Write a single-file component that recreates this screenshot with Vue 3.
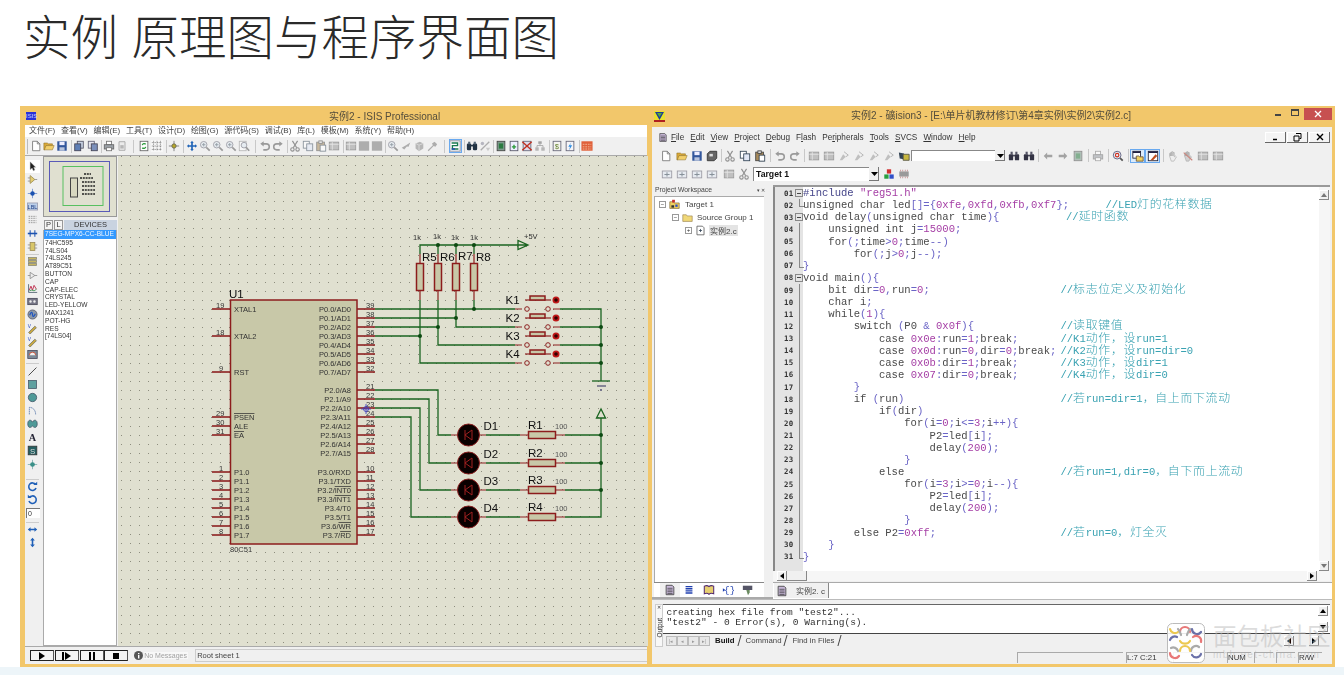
<script setup>
// toolbar tokens: name = icon, name~ = greyed out, name! = pressed, number = spacer width
function parseBar(list) {
  return list.map((t) => {
    if (typeof t === 'number') return { gap: t };
    if (typeof t === 'object') return t;
    const last = t[t.length - 1];
    if (last === '~') return { icon: t.slice(0, -1), dim: true };
    if (last === '!') return { icon: t.slice(0, -1), on: true };
    return { icon: t };
  });
}

const isisBar = parseBar([
  'new', 'open', 'save', 4, 'stack', 1, 'stack2', 3, 'print', 'area~', 9, 'refresh', 'grid', 4, 'origin', 5,
  'cross', 'zin~', 'zin~', 'zin~', 'zarea~', 8, 'undo~', 'redo~', 4, 'cut~', 'copy~', 'paste~', 'block~', 4,
  'block~', 'fill~', 'fill~', 3, 'zin~', 'pick~', 'pkg~', 'tool~', 10, 'wire!', 4, 'find', 'tag~', 3,
  'sheet', 'sheetadd', 'sheetx', 'tree~', 4, 'bom', 'check', 4, 'red'
]);

const isisSide = [
  'arrow', 'comp', 'junction', 'lbl', 'script', 'bus', 'subc', 2, 'term', 'port', 'graph', 'tape', 'gen', 'probe',
  'probe', 'instr', 3, 'line', 'rect', 'circ', 'arc', 'blob', 'letter', 'sym', 'marker', 9, 'cw', 'ccw', 'input',
  3, 'fliph', 'flipv'
];

const uvRow1 = parseBar([
  'new', 1, 'open', 'save', 'saveall', 3, 'cut~', 'copy', 'paste', 5, 'undo~', 'redo~', 4, 'block~', 'block~',
  'flag~', 'flag~', 'flag~', 'flag~', 'findf', { combo: 94, text: '' }, 1, 'binoc', 'binoc', 4, 'back~', 'fwd~',
  'sheet~', 5, 'print~', 5, 'dbg', 5, 'win!', 'win2!', 5, 'hand~', 'hand2~', 'block~', 'block~'
]);
const uvRow2 = parseBar([
  'build~', 'build~', 'build~', 'build~', 2, 'block~', 'cut~', 2, { combo: 126, text: 'Target 1' }, 2, 'cubes', 'chip~'
]);

const isisMenu = ['文件(F)', '查看(V)', '编辑(E)', '工具(T)', '设计(D)', '绘图(G)', '源代码(S)', '调试(B)', '库(L)', '模板(M)', '系统(Y)', '帮助(H)'];
const uvMenu = [
  ['', 'F', 'ile'], ['', 'E', 'dit'], ['', 'V', 'iew'], ['', 'P', 'roject'], ['', 'D', 'ebug'], ['F', 'l', 'ash'],
  ['Pe', 'r', 'ipherals'], ['', 'T', 'ools'], ['', 'S', 'VCS'], ['', 'W', 'indow'], ['', 'H', 'elp']
];
const devices = ['7SEG-MPX6-CC-BLUE', '74HC595', '74LS04', '74LS245', 'AT89C51', 'BUTTON', 'CAP', 'CAP-ELEC', 'CRYSTAL', 'LED-YELLOW', 'MAX1241', 'POT-HG', 'RES', '[74LS04]'];

/* --- schematic --- */
const p1 = [0, 1, 2, 3, 4, 5, 6, 7].map((i) => ({ no: i + 1, y: 472 + i * 9, text: 'P1.' + i }));
const leftPins = [
  { no: 19, y: 309, text: 'XTAL1' }, { no: 18, y: 336, text: 'XTAL2' }, { no: 9, y: 372, text: 'RST' },
  { no: 29, y: 417, bar: 'PSEN' }, { no: 30, y: 426, text: 'ALE' }, { no: 31, y: 435, bar: 'EA' }, ...p1
];
const p0 = [0, 1, 2, 3, 4, 5, 6, 7].map((i) => ({ no: 39 - i, y: 309 + i * 9, text: `P0.${i}/AD${i}` }));
const p2 = ['A8', 'A9', 'A10', 'A11', 'A12', 'A13', 'A14', 'A15'].map((a, i) => ({ no: 21 + i, y: 390 + i * 9, text: `P2.${i}/${a}` }));
const p3 = [['RXD'], ['TXD'], ['', 'INT0'], ['', 'INT1'], ['T0'], ['T1'], ['', 'WR'], ['', 'RD']].map((a, i) => ({
  no: 10 + i, y: 472 + i * 9, text: `P3.${i}/${a[0]}`, bar: a[1]
}));
const rightPins = [...p0, ...p2, ...p3];

const greenWires = [
  '420,300 420,363 515,363', '438,300 438,345 515,345', '456,300 456,327 515,327', '474,300 474,309',
  '375,309 515,309', '375,318 456,318', '375,327 438,327', '375,336 420,336',
  '560,309 601,309 601,381', '560,327 601,327', '560,345 601,345', '560,363 601,363',
  '420,254 420,245 518,245', '438,245 438,254', '456,245 456,254', '474,245 474,254',
  '375,390 438,390 438,435 451,435', '375,399 429,399 429,463 451,463',
  '375,408 420,408 420,490 451,490', '375,417 411,417 411,517 451,517',
  '486,435 520,435', '486,463 520,463', '486,490 520,490', '486,517 520,517',
  '565,435 601,435', '565,463 601,463', '565,490 601,490', '565,517 601,517 601,418'
];
const junctions = [
  [438, 245], [456, 245], [474, 245], [474, 309], [456, 318], [438, 327], [420, 336],
  [601, 327], [601, 345], [601, 363], [601, 435], [601, 463], [601, 490]
];
const pullups = [
  { x: 420, name: 'R5', nameY: 261, kY: 240, kX: 413 }, { x: 438, name: 'R6', nameY: 261, kY: 239, kX: 433 },
  { x: 456, name: 'R7', nameY: 260, kY: 240, kX: 451 }, { x: 474, name: 'R8', nameY: 261, kY: 240, kX: 470 }
];
const keys = [
  { name: 'K1', y: 309 }, { name: 'K2', y: 327 }, { name: 'K3', y: 345 }, { name: 'K4', y: 363 }
];
const leds = [
  { d: 'D1', r: 'R1', y: 435 }, { d: 'D2', r: 'R2', y: 463 }, { d: 'D3', r: 'R3', y: 490 }, { d: 'D4', r: 'R4', y: 517 }
];

/* --- source listing --- */
const source = [
  ['#include "reg51.h"'],
  ['unsigned char led[]={0xfe,0xfd,0xfb,0xf7};', '//LED灯的花样数据', 302.4],
  ['void delay(unsigned char time){', '//延时函数', 263],
  ['    unsigned int j=15000;'],
  ['    for(;time>0;time--)'],
  ['        for(;j>0;j--);'],
  ['}'],
  ['void main(){'],
  ['    bit dir=0,run=0;', '//标志位定义及初始化'],
  ['    char i;'],
  ['    while(1){'],
  ['        switch (P0 & 0x0f){', '//读取键值'],
  ['            case 0x0e:run=1;break;', '//K1动作，设run=1'],
  ['            case 0x0d:run=0,dir=0;break;', '//K2动作，设run=dir=0'],
  ['            case 0x0b:dir=1;break;', '//K3动作，设dir=1'],
  ['            case 0x07:dir=0;break;', '//K4动作，设dir=0'],
  ['        }'],
  ['        if (run)', '//若run=dir=1，自上而下流动'],
  ['            if(dir)'],
  ['                for(i=0;i<=3;i++){'],
  ['                    P2=led[i];'],
  ['                    delay(200);'],
  ['                }'],
  ['            else', '//若run=1,dir=0，自下而上流动'],
  ['                for(i=3;i>=0;i--){'],
  ['                    P2=led[i];'],
  ['                    delay(200);'],
  ['                }'],
  ['        else P2=0xff;', '//若run=0，灯全灭'],
  ['    }'],
  ['}']
];

function tokenize(code) {
  const parts = code.match(/"[^"]*"|\b0x[0-9a-f]+\b|\b\d+\b|#?[A-Za-z_][\w]*|\s+|./g) || [];
  return parts.map((text) => {
    let kind = 'op';
    if (text[0] === '"') kind = 'str';
    else if (/^(0x|\d)/.test(text)) kind = 'num';
    else if (text[0] === '#') kind = 'pre';
    else if (/^[A-Za-z_\s]/.test(text)) kind = 'word';
    return { text, kind };
  });
}
function splitNote(note) {
  return (note.match(/[\u4e00-\u9fff\uff0c]+|[^\u4e00-\u9fff\uff0c]+/g) || []).map((text) => ({
    text,
    cjk: /[\u4e00-\u9fff\uff0c]/.test(text)
  }));
}
const lines = source.map((row, i) => ({
  no: String(i + 1).padStart(2, '0'),
  tokens: tokenize(row[0]),
  note: row[1] ? splitNote(row[1]) : null,
  width: row[2] || 257.4,
  fold: [0, 2, 7].includes(i) ? 'box' : i === 6 || i === 1 || i === 30 ? 'end' : 'bar'
}));
</script>

<template>
  <div class="slide">
    <svg class="defs" aria-hidden="true">
      <defs>
        <symbol id="i-new" viewBox="0 0 14 14"><path d="M3 1.5h5.5L11.500 4.500v8H3z" fill="#fff" stroke="#777"/><path d="M8.500 1.500v3h3" fill="none" stroke="#777"/></symbol>
        <symbol id="i-open" viewBox="0 0 14 14"><path d="M1 3.500h4l1 1h5v2H4l-2 5H1z" fill="#d9a93a" stroke="#8a6a20" stroke-width=".6"/><path d="M3.500 6.500H13l-2 5H1.500z" fill="#f2cf6b" stroke="#8a6a20" stroke-width=".6"/></symbol>
        <symbol id="i-save" viewBox="0 0 14 14"><rect x="1.500" y="1.500" width="11" height="11" fill="#33579c"/><rect x="4" y="2" width="6" height="4" fill="#eef"/><rect x="4" y="8.500" width="6" height="4" fill="#b9c4dc"/></symbol>
        <symbol id="i-stack" viewBox="0 0 14 14"><rect x="5" y="1.500" width="7" height="8" fill="#c8d2e4" stroke="#556"/><rect x="2" y="4.500" width="7" height="8" fill="#5f7fb5" stroke="#445"/></symbol>
        <symbol id="i-stack2" viewBox="0 0 14 14"><rect x="1.500" y="1.500" width="7" height="8" fill="#e6e6ee" stroke="#667"/><rect x="5" y="4.500" width="7" height="8" fill="#7c90bb" stroke="#445"/></symbol>
        <symbol id="i-print" viewBox="0 0 14 14"><rect x="4" y="1.500" width="6" height="4" fill="#fff" stroke="#777"/><rect x="1.500" y="5.500" width="11" height="5" fill="#9aa0a6" stroke="#666"/><rect x="4" y="9" width="6" height="3.500" fill="#fff" stroke="#777"/></symbol>
        <symbol id="i-area" viewBox="0 0 14 14"><path d="M3.500 2h7v10h-7z" fill="#e8e8e8" stroke="#666"/><rect x="5" y="6" width="4" height="4" fill="#888"/></symbol>
        <symbol id="i-refresh" viewBox="0 0 14 14"><rect x="2.500" y="1.500" width="9" height="11" fill="#fff" stroke="#666"/><path d="M5 6a2.300 2.300 0 0 1 4-1M9 8a2.300 2.300 0 0 1-4 1" fill="none" stroke="#2a9a3a" stroke-width="1.500"/></symbol>
        <symbol id="i-grid" viewBox="0 0 14 14"><rect width="14" height="14" fill="#f7f7f7"/><path d="M1 3h12M1 7h12M1 11h12M3 1v12M7 1v12M11 1v12" stroke="#555" stroke-dasharray="1 1" stroke-width=".8"/></symbol>
        <symbol id="i-origin" viewBox="0 0 14 14"><path d="M1 7h12M7 1v12" stroke="#777"/><circle cx="7" cy="7" r="2.500" fill="#b8a828" stroke="#665"/></symbol>
        <symbol id="i-cross" viewBox="0 0 14 14"><path d="M7 1l2 2.500H8V6h2.500V5l2.500 2-2.500 2V8H8v2.500h1L7 13l-2-2.500h1V8H3.500v1L1 7l2.500-2v1H6V3.500H5z" fill="#2366b8"/></symbol>
        <symbol id="i-zin" viewBox="0 0 14 14"><circle cx="5.500" cy="5.500" r="3.800" fill="#dfe8f0" stroke="#556"/><path d="M8.500 8.500l4 4" stroke="#555" stroke-width="2"/><path d="M3.500 5.500h4M5.500 3.500v4" stroke="#456"/></symbol>
        <symbol id="i-zarea" viewBox="0 0 14 14"><rect x="1.500" y="1.500" width="8" height="11" fill="#fff" stroke="#888"/><circle cx="7" cy="6" r="3.300" fill="#dfeaf2" stroke="#556"/><path d="M9.500 8.500l3.500 4" stroke="#555" stroke-width="2"/></symbol>
        <symbol id="i-undo" viewBox="0 0 14 14"><path d="M3.500 4.500h5a3.500 3.500 0 0 1 0 7H5" fill="none" stroke="#555" stroke-width="1.800"/><path d="M5.500 1.500l-4 3 4 3z" fill="#555"/></symbol>
        <symbol id="i-redo" viewBox="0 0 14 14"><path d="M10.500 4.500h-5a3.500 3.500 0 0 0 0 7H9" fill="none" stroke="#555" stroke-width="1.800"/><path d="M8.500 1.500l4 3-4 3z" fill="#555"/></symbol>
        <symbol id="i-cut" viewBox="0 0 14 14"><path d="M4 1l5 8M10 1L5 9" stroke="#444" stroke-width="1.400"/><circle cx="4" cy="11" r="2" fill="none" stroke="#444" stroke-width="1.300"/><circle cx="10" cy="11" r="2" fill="none" stroke="#444" stroke-width="1.300"/></symbol>
        <symbol id="i-copy" viewBox="0 0 14 14"><rect x="1.500" y="1.500" width="7" height="8" fill="#fff" stroke="#345"/><rect x="5.500" y="4.500" width="7" height="8" fill="#dfe6f4" stroke="#345"/></symbol>
        <symbol id="i-paste" viewBox="0 0 14 14"><rect x="2" y="2.500" width="9" height="10" fill="#a98b5a" stroke="#444"/><rect x="4.500" y="1" width="4" height="3" fill="#ddd" stroke="#444"/><rect x="6" y="6" width="6.500" height="7" fill="#fff" stroke="#345"/></symbol>
        <symbol id="i-block" viewBox="0 0 14 14"><rect x="1.500" y="2.500" width="11" height="9" fill="#999" stroke="#555"/><path d="M1.500 5h11M5 2.500v9" stroke="#ddd"/></symbol>
        <symbol id="i-fill" viewBox="0 0 14 14"><rect x="1" y="1.500" width="12" height="11" fill="#777"/></symbol>
        <symbol id="i-pick" viewBox="0 0 14 14"><path d="M2 9l5-3 5-3-2 5-2-.5L5 11z" fill="#777"/></symbol>
        <symbol id="i-pkg" viewBox="0 0 14 14"><path d="M3 4l5-2 4 2v6l-5 3-4-3z" fill="#888"/><path d="M3 4l4 2 5-2M7 6v7" stroke="#ccc" fill="none"/></symbol>
        <symbol id="i-tool" viewBox="0 0 14 14"><path d="M2 12l6-6-1-2 3-2 3 3-2 3-2-1-6 6z" fill="#777"/></symbol>
        <symbol id="i-wire" viewBox="0 0 14 14"><rect x="1" y="1" width="12" height="12" fill="#fff" stroke="#889"/><path d="M3 3.500h7v3H4v4h7" fill="none" stroke="#1a7a50" stroke-width="1.600"/><path d="M3 10.500h4" stroke="#2244bb" stroke-width="1.600"/></symbol>
        <symbol id="i-find" viewBox="0 0 14 14"><rect x="1" y="4" width="5" height="8" rx="1.500" fill="#234"/><rect x="8" y="4" width="5" height="8" rx="1.500" fill="#234"/><rect x="2.500" y="2" width="2.500" height="3" fill="#567"/><rect x="9" y="2" width="2.500" height="3" fill="#567"/><rect x="5" y="5.500" width="4" height="2" fill="#234"/></symbol>
        <symbol id="i-tag" viewBox="0 0 14 14"><path d="M2 12L12 2" stroke="#777" stroke-width="1.500"/><circle cx="4" cy="4" r="2" fill="#889"/><path d="M8 9h5l-2.500 4z" fill="#aaa"/></symbol>
        <symbol id="i-sheet" viewBox="0 0 14 14"><rect x="2.500" y="1.500" width="9" height="11" fill="#7c9a8c" stroke="#444"/><rect x="4.500" y="4" width="5" height="6" fill="#2a7a40"/></symbol>
        <symbol id="i-sheetadd" viewBox="0 0 14 14"><rect x="2.500" y="1.500" width="9" height="11" fill="#eef" stroke="#556"/><path d="M4.500 8h5M7 5.500v5" stroke="#2a9a3a" stroke-width="1.600"/></symbol>
        <symbol id="i-sheetx" viewBox="0 0 14 14"><rect x="2.500" y="1.500" width="9" height="11" fill="#dde" stroke="#667"/><path d="M1.500 2l11 10M12.500 2l-11 10" stroke="#c03020" stroke-width="1.600"/></symbol>
        <symbol id="i-tree" viewBox="0 0 14 14"><rect x="5" y="1.500" width="4" height="3" fill="#666"/><rect x="1.500" y="8.500" width="4" height="4" fill="#888"/><rect x="8.500" y="8.500" width="4" height="4" fill="#888"/><path d="M7 4.500v2H3.500v2M7 6.500h3.500v2" stroke="#666" fill="none"/></symbol>
        <symbol id="i-bom" viewBox="0 0 14 14"><rect x="2.500" y="1.500" width="9" height="11" fill="#f4f4f0" stroke="#667"/><text x="7" y="10.500" font-size="8" text-anchor="middle" fill="#5a7a20" font-family="Liberation Sans">$</text></symbol>
        <symbol id="i-check" viewBox="0 0 14 14"><rect x="2.500" y="1.500" width="9" height="11" fill="#f4f4f8" stroke="#667"/><path d="M8.500 2.500L5 8h2l-1 4 3.500-6H7z" fill="#2a8ae0"/></symbol>
        <symbol id="i-red" viewBox="0 0 14 14"><rect x=".5" y="1.500" width="13" height="11" fill="#e0603a"/><path d="M2 5h10M2 8h10M2 10.500h10" stroke="#f4c0a0" stroke-dasharray="2 1"/></symbol>
        <symbol id="i-saveall" viewBox="0 0 14 14"><path d="M4.500 1.500h8v8l-3 3h-8v-8z" fill="#666" stroke="#333"/><rect x="4" y="4.500" width="4" height="3" fill="#ddd"/></symbol>
        <symbol id="i-flag" viewBox="0 0 14 14"><path d="M2 12l4-7 3 3-4 4z" fill="#999"/><path d="M7 2l5 4-3 2" fill="none" stroke="#777"/></symbol>
        <symbol id="i-findf" viewBox="0 0 14 14"><path d="M1 3l6 1 1 7-6-1z" fill="#345"/><path d="M6 5h7v7H6z" fill="#c8b840" stroke="#554"/></symbol>
        <symbol id="i-binoc" viewBox="0 0 14 14"><rect x="1" y="5" width="5" height="7" rx="1" fill="#334"/><rect x="8" y="5" width="5" height="7" rx="1" fill="#334"/><rect x="3" y="2" width="2.500" height="3.500" fill="#556"/><rect x="8.500" y="2" width="2.500" height="3.500" fill="#556"/><rect x="6" y="5.500" width="2" height="2" fill="#334"/></symbol>
        <symbol id="i-back" viewBox="0 0 14 14"><path d="M6 3L2 7l4 4V8.500h6v-3H6z" fill="#666"/></symbol>
        <symbol id="i-fwd" viewBox="0 0 14 14"><path d="M8 3l4 4-4 4V8.500H2v-3h6z" fill="#666"/></symbol>
        <symbol id="i-dbg" viewBox="0 0 14 14"><circle cx="6" cy="6" r="4.500" fill="#e8eef4" stroke="#557"/><circle cx="6" cy="6" r="2" fill="none" stroke="#d03020" stroke-width="1.300"/><path d="M9.500 9.500l3 3" stroke="#555" stroke-width="2"/></symbol>
        <symbol id="i-win" viewBox="0 0 14 14"><rect x="1" y="1.500" width="9" height="8" fill="#fff" stroke="#223"/><rect x="1" y="1.500" width="9" height="2" fill="#224"/><path d="M5 7h3l1 1h4v5H5z" fill="#f0d060" stroke="#654"/></symbol>
        <symbol id="i-win2" viewBox="0 0 14 14"><rect x="1.500" y="1.500" width="11" height="11" fill="#fff" stroke="#223"/><rect x="1.500" y="1.500" width="11" height="2" fill="#224"/><path d="M4 12l6-7 2 2-5 5z" fill="#c05020"/></symbol>
        <symbol id="i-hand" viewBox="0 0 14 14"><path d="M3 7V4h1v3-4h1.500v4-5H7v5-4h1.500v5l1.500-1 1 1-3 5H5z" fill="#eee" stroke="#666" stroke-width=".7"/></symbol>
        <symbol id="i-hand2" viewBox="0 0 14 14"><path d="M3 7V4h1v3-4h1.500v4-5H7v5-4h1.500v5l1.500-1 1 1-3 5H5z" fill="#bbb" stroke="#666" stroke-width=".7"/><path d="M2 3l10 9" stroke="#b03020" stroke-width="1.300"/></symbol>
        <symbol id="i-build" viewBox="0 0 14 14"><rect x="1.500" y="3.500" width="11" height="8" fill="#dfe6f0" stroke="#556"/><path d="M4 7.500h6M7 5v5" stroke="#345" stroke-width="1.200"/></symbol>
        <symbol id="i-cubes" viewBox="0 0 14 14"><rect x="4.500" y="1.500" width="5" height="5" fill="#d03030"/><rect x="1.500" y="7.500" width="5" height="5" fill="#28a040"/><rect x="7.500" y="7.500" width="5" height="5" fill="#3050c8"/></symbol>
        <symbol id="i-chip" viewBox="0 0 14 14"><rect x="1.500" y="4" width="11" height="6" fill="#555"/><path d="M3 2v2M5.500 2v2M8.500 2v2M11 2v2M3 10v2M5.500 10v2M8.500 10v2M11 10v2" stroke="#a04040"/></symbol>
        <symbol id="i-arrow" viewBox="0 0 14 14"><path d="M4 1v10l2.500-2L8 12.500l2-1L8.500 8H11z" fill="#222" stroke="#aaa" stroke-width=".5"/></symbol>
        <symbol id="i-comp" viewBox="0 0 14 14"><path d="M4 2v10l6-5z" fill="#e4cd70" stroke="#998850"/><path d="M1 5h3M1 9h3M10 7h3" stroke="#888"/></symbol>
        <symbol id="i-junction" viewBox="0 0 14 14"><path d="M1 7h12M7 1v12" stroke="#6688cc"/><circle cx="7" cy="7" r="2.800" fill="#1c52b0"/></symbol>
        <symbol id="i-lbl" viewBox="0 0 14 14"><rect x=".5" y="2.500" width="13" height="9" fill="#bcd0ea" stroke="#99a"/><text x="7" y="10" font-size="7" text-anchor="middle" fill="#1a3a80" font-family="Liberation Sans">LBL</text></symbol>
        <symbol id="i-script" viewBox="0 0 14 14"><path d="M2 3h10M2 5.500h10M2 8.500h10M2 11h10" stroke="#888" stroke-dasharray="2 1"/></symbol>
        <symbol id="i-bus" viewBox="0 0 14 14"><path d="M1 7h12" stroke="#1c52b0" stroke-width="2"/><path d="M4 3v8M10 3v8" stroke="#1c52b0" stroke-width="1.300"/></symbol>
        <symbol id="i-subc" viewBox="0 0 14 14"><rect x="4" y="2" width="6" height="10" fill="#d8c668" stroke="#998850"/><path d="M1 5h3M1 9h3M10 5h3M10 9h3" stroke="#888"/></symbol>
        <symbol id="i-term" viewBox="0 0 14 14"><rect x="2" y="2" width="10" height="2.500" fill="#c8b660" stroke="#887"/><rect x="2" y="5.800" width="10" height="2.500" fill="#c8b660" stroke="#887"/><rect x="2" y="9.600" width="10" height="2.500" fill="#c8b660" stroke="#887"/></symbol>
        <symbol id="i-port" viewBox="0 0 14 14"><path d="M4 3v8l6-4z" fill="#eee" stroke="#888"/><path d="M1 7h3M10 7h3" stroke="#888"/></symbol>
        <symbol id="i-graph" viewBox="0 0 14 14"><path d="M2 1.500v10.500h11" fill="none" stroke="#456"/><path d="M3 9l2-5 2 5 2-6 3 5" fill="none" stroke="#c03050" stroke-width="1.200"/><path d="M3 10l3-1 3 1 3-2" fill="none" stroke="#2a8a40"/></symbol>
        <symbol id="i-tape" viewBox="0 0 14 14"><rect x="1" y="3" width="12" height="8" fill="#778" stroke="#445"/><circle cx="4.500" cy="7" r="1.500" fill="#eee"/><circle cx="9.500" cy="7" r="1.500" fill="#eee"/></symbol>
        <symbol id="i-gen" viewBox="0 0 14 14"><circle cx="7" cy="7" r="5.800" fill="#8c98a8" stroke="#556"/><path d="M3.500 8c1.500-5 3-5 3.500-1s2 3 3.500-1" fill="none" stroke="#1c52c0" stroke-width="1.500"/></symbol>
        <symbol id="i-probe" viewBox="0 0 14 14"><path d="M2 12l8-8 2 2-8 8z" fill="#c8a840" stroke="#776"/><text x="1" y="6" font-size="6" fill="#2244bb" font-family="Liberation Sans">V</text></symbol>
        <symbol id="i-instr" viewBox="0 0 14 14"><rect x="1" y="2" width="12" height="10" fill="#7c8a98" stroke="#445"/><path d="M3 8a4 4 0 0 1 8 0" fill="#f0f0f0" stroke="#d04020"/></symbol>
        <symbol id="i-line" viewBox="0 0 14 14"><path d="M2 12L12 2" stroke="#333" stroke-width="1.100"/></symbol>
        <symbol id="i-rect" viewBox="0 0 14 14"><rect x="2" y="2" width="10" height="10" fill="#5fa0a0" stroke="#456"/></symbol>
        <symbol id="i-circ" viewBox="0 0 14 14"><circle cx="7" cy="7" r="5.300" fill="#4f9a98" stroke="#456"/></symbol>
        <symbol id="i-arc" viewBox="0 0 14 14"><path d="M3 12V3c5 0 8 4 8 9" fill="none" stroke="#5577aa" stroke-dasharray="2 .6"/></symbol>
        <symbol id="i-blob" viewBox="0 0 14 14"><path d="M7 4C5 0 1 1 1 6s3 6 6 3c3 3 6 2 6-3S9 0 7 4z" fill="#4f9a98" stroke="#456"/></symbol>
        <symbol id="i-letter" viewBox="0 0 14 14"><text x="7" y="12" font-size="13" font-weight="700" text-anchor="middle" fill="#223" font-family="Liberation Serif">A</text></symbol>
        <symbol id="i-sym" viewBox="0 0 14 14"><rect x="1.500" y="1.500" width="11" height="11" fill="#235e60" stroke="#333"/><text x="7" y="11" font-size="10" text-anchor="middle" fill="#ddd" font-family="Liberation Sans">S</text></symbol>
        <symbol id="i-marker" viewBox="0 0 14 14"><path d="M1 7h12M7 1v12" stroke="#7aa"/><circle cx="7" cy="7" r="3" fill="#3a9088"/></symbol>
        <symbol id="i-cw" viewBox="0 0 14 14"><path d="M11 4.500A4.800 4.800 0 1 0 11.500 9" fill="none" stroke="#2060b8" stroke-width="2"/><path d="M8 5h5V1z" fill="#2060b8"/></symbol>
        <symbol id="i-ccw" viewBox="0 0 14 14"><path d="M3 4.500A4.800 4.800 0 1 1 2.500 9" fill="none" stroke="#2060b8" stroke-width="2"/><path d="M6 5H1V1z" fill="#2060b8"/></symbol>
        <symbol id="i-fliph" viewBox="0 0 14 14"><path d="M1 7l3.500-3v2h5V4L13 7l-3.500 3V8h-5v2z" fill="#2060b8"/></symbol>
        <symbol id="i-flipv" viewBox="0 0 14 14"><path d="M7 1l3 3.500H8v5h2L7 13l-3-3.500h2v-5H4z" fill="#2060b8"/></symbol>
        <symbol id="i-doc" viewBox="0 0 14 14"><path d="M2.500 1.500h7l2 2v9h-9z" fill="#c8b8d8" stroke="#444"/><path d="M4 5h6M4 7h6M4 9h6M4 11h6" stroke="#333" stroke-width=".8"/></symbol>
        <symbol id="i-regs" viewBox="0 0 14 14"><path d="M3 3h8M3 5.500h8M3 8h8M3 10.500h8" stroke="#2040b0" stroke-width="1.600"/></symbol>
        <symbol id="i-book" viewBox="0 0 14 14"><path d="M1.500 2.500C4 1.500 6 2 7 3c1-1 3-1.500 5.500-.5v9C10 10.500 8 11 7 12c-1-1-3-1.500-5.500-.5z" fill="#e8d070" stroke="#502a70" stroke-width="1.200"/></symbol>
        <symbol id="i-braces" viewBox="0 0 14 14"><path d="M1 5l3 2-3 2z" fill="#2040b0"/><text x="9" y="11" font-size="11" text-anchor="middle" fill="#2040b0" font-family="Liberation Mono">{}</text></symbol>
        <symbol id="i-tmpl" viewBox="0 0 14 14"><rect x="1" y="2" width="11" height="5" fill="#556"/><path d="M5 7h4v3l-2 3z" fill="#6a8a60"/></symbol>
        <symbol id="i-target" viewBox="0 0 14 14"><path d="M1 3.500h4.500l1 1.500H13v7H1z" fill="#f0d060" stroke="#776030" stroke-width=".8"/><rect x="4" y="1" width="3.500" height="3.500" fill="#c83028"/><rect x="3" y="8" width="3.500" height="3" fill="#303030"/><rect x="8" y="7" width="3" height="3" fill="#3050c0"/></symbol>
        <symbol id="i-folder" viewBox="0 0 14 14"><path d="M1 3.500h4.500l1 1.500H13v7H1z" fill="#f0d878" stroke="#998050" stroke-width=".8"/></symbol>
        <symbol id="i-cfile" viewBox="0 0 14 14"><path d="M2.500 1.500h7l2 2v9h-9z" fill="#fff" stroke="#555"/><path d="M5 7h4M7 5v4" stroke="#345"/></symbol>
      </defs>
    </svg>

    <h1 class="heading">实例 原理图与程序界面图</h1>

    <div class="windows">
      <!-- ISIS schematic window -->
      <section class="win isis">
        <header class="caption isis-cap">
          <span class="isis-logo">ISIS</span>
          <span class="cap-text">实例2 - ISIS Professional</span>
        </header>
        <nav class="isis-menu">
          <span v-for="m in isisMenu" :key="m">{{ m }}</span>
        </nav>
        <div class="isis-bar">
          <template v-for="(t, i) in isisBar" :key="i">
            <i v-if="t.gap" class="gap" :class="{ rule: t.gap >= 3 }" :style="{ width: t.gap + 'px' }"></i>
            <span v-else class="tb" :class="{ dim: t.dim, on: t.on }"><svg class="ico"><use :href="'#i-' + t.icon" /></svg></span>
          </template>
        </div>

        <div class="isis-main">
          <div class="side">
            <template v-for="(t, i) in isisSide" :key="i">
              <i v-if="typeof t === 'number'" class="side-rule" :style="{ height: t + 'px' }"></i>
              <input v-else-if="t === 'input'" class="angle" value="0" readonly />
              <span v-else class="side-btn" :class="{ first: t === 'arrow' }"><svg class="ico"><use :href="'#i-' + t" /></svg></span>
            </template>
          </div>

          <div class="picker">
            <div class="preview">
              <svg viewBox="43 156 74 61" width="74" height="61">
                <rect x="49.500" y="161.500" width="60" height="50" fill="none" stroke="#5a5ab8" />
                <rect x="63" y="166.500" width="40" height="39" fill="none" stroke="#58c060" />
                <rect x="70.500" y="178" width="7" height="19" fill="#d8d8c0" stroke="#444" />
                <path d="M80 178h13M84 174h7M82 182h13M82 186h13M82 190h13M82 194h13" stroke="#222" stroke-width="1.600" stroke-dasharray="2 .8" />
              </svg>
            </div>
            <div class="dev-head">
              <span class="dev-btn">P</span><span class="dev-btn">L</span><span class="dev-title">DEVICES</span>
            </div>
            <ul class="dev-list">
              <li v-for="(d, i) in devices" :key="d" :class="{ sel: i === 0 }">{{ d }}</li>
            </ul>
          </div>

          <svg class="sheet" viewBox="118 156 530 490" width="530" height="490">
            <defs>
              <pattern id="dots" x="121" y="165" width="9" height="9" patternUnits="userSpaceOnUse">
                <rect width="1" height="1" fill="#8d8d7e" />
              </pattern>
            </defs>
            <rect x="118" y="156" width="530" height="490" fill="#e0e0d0" />
            <rect x="118" y="156" width="530" height="490" fill="url(#dots)" />

            <!-- U1 -->
            <rect x="230.500" y="300" width="126.500" height="244" class="chip" />
            <text x="229" y="298" class="big">U1</text>
            <text x="230" y="552" class="small">80C51</text>
            <g v-for="p in leftPins" :key="p.no">
              <path :d="`M212 ${p.y}h18`" class="pin" />
              <text x="217" :y="p.y - 1" class="small" :dx="p.no > 9 ? -1 : 2">{{ p.no }}</text>
              <text x="234" :y="p.y + 3" class="small" :class="{ over: p.bar }">{{ p.text || p.bar }}</text>
            </g>
            <g v-for="p in rightPins" :key="p.no">
              <path :d="`M357 ${p.y}h18`" class="pin" />
              <text x="366" :y="p.y - 1" class="small">{{ p.no }}</text>
              <text x="351" :y="p.y + 3" class="small" text-anchor="end">{{ p.text }}<tspan v-if="p.bar" class="over">{{ p.bar }}</tspan></text>
            </g>

            <!-- wires -->
            <polyline v-for="w in greenWires" :key="w" :points="w" class="wire" />
            <circle v-for="(j, i) in junctions" :key="i" :cx="j[0]" :cy="j[1]" r="2" class="dot" />
            <path d="M518 245l10 0M518 240.500v9l10-4.500z" class="arrow" />
            <path d="M592 381h18" class="wire" />
            <path d="M597 386h9" class="wire thin" />
            <path d="M600 390h2" class="wire thin" />
            <path d="M601 409l-4.500 9h9z" class="arrow" />

            <!-- pull-up resistors -->
            <g v-for="r in pullups" :key="r.name">
              <path :d="`M${r.x} 254v10M${r.x} 291v9`" class="pin thin" />
              <rect :x="r.x - 3.500" y="263.500" width="7" height="27" class="chip" />
              <text :x="r.x + 2" :y="r.nameY" class="big">{{ r.name }}</text>
              <text :x="r.kX" :y="r.kY" class="small">1k</text>
            </g>
            <text x="524" y="239" class="small">+5V</text>

            <!-- key switches -->
            <g v-for="(k, i) in keys" :key="k.name">
              <text x="505.500" :y="304 + i * 18" class="big">{{ k.name }}</text>
              <path :d="`M515 ${k.y}h7M553 ${k.y}h7`" class="pin thin" />
              <circle cx="527" :cy="k.y" r="2.300" class="contact" />
              <circle cx="548" :cy="k.y" r="2.300" class="contact" />
              <path :d="`M525 ${k.y - 9}h26`" class="pin thin" />
              <rect x="530" :y="k.y - 13" width="15" height="4" class="chip" />
              <circle cx="556" :cy="k.y - 9" r="3.500" fill="#c01818" />
              <circle cx="556" :cy="k.y - 9" r="1.800" fill="#300" />
            </g>

            <!-- LEDs and series resistors -->
            <g v-for="l in leds" :key="l.d">
              <path :d="`M451 ${l.y}h35M520 ${l.y}h8M556 ${l.y}h9`" class="pin thin" />
              <circle cx="468.500" :cy="l.y" r="11" fill="#0a0000" stroke="#8c2020" />
              <path :d="`M472 ${l.y - 5}v10l-7-5zM465 ${l.y - 5}v10`" fill="none" stroke="#a02020" />
              <rect x="528.500" :y="l.y - 3.500" width="27" height="7" class="chip" />
              <text x="483.500" :y="l.y - 5" class="big">{{ l.d }}</text>
              <text x="528" :y="l.y - 6" class="big">{{ l.r }}</text>
              <text x="555" :y="l.y - 6" class="small tiny">100</text>
            </g>

            <!-- mouse cursor left on the sheet -->
            <path d="M366 404v10M361 409h10" stroke="#3838c0" stroke-width=".8" />
            <circle cx="366" cy="409" r="2.500" fill="none" stroke="#3838c0" stroke-width=".8" />
          </svg>
        </div>

        <footer class="isis-status">
          <div class="sim">
            <span class="sim-btn"><svg width="8" height="8"><path d="M1 0v8l6-4z" /></svg></span>
            <span class="sim-btn"><svg width="10" height="8"><path d="M0 0h2v8H0zM3 0v8l6-4z" /></svg></span>
            <span class="sim-btn"><svg width="8" height="8"><path d="M1 0h2v8H1zM5 0h2v8H5z" /></svg></span>
            <span class="sim-btn"><svg width="8" height="8"><path d="M1 1h6v6H1z" /></svg></span>
          </div>
          <svg class="info" width="9" height="9"><circle cx="4.500" cy="4.500" r="4.500" fill="#555" /><rect x="4" y="4" width="1.400" height="3.500" fill="#fff" /><rect x="4" y="2" width="1.400" height="1.200" fill="#fff" /></svg>
          <span class="msgs">No Messages</span>
          <span class="sheetname">Root sheet 1</span>
        </footer>
      </section>

      <!-- uVision window -->
      <section class="win uv">
        <header class="caption uv-cap">
          <svg class="uv-logo" width="11" height="11" viewBox="0 0 11 11">
            <rect width="11" height="11" fill="#e8e030" /><path d="M1 1h9L5.500 9z" fill="#1c3c98" /><path d="M3 2h5L5.500 6z" fill="#58a838" /><rect y="9" width="11" height="2" fill="#b02020" />
          </svg>
          <span class="cap-text">实例2 - 礦ision3 - [E:\单片机教材修订\第4章实例\实例2\实例2.c]</span>
          <span class="cap-btn"><svg width="8" height="8"><path d="M1 6h6" stroke="#444" stroke-width="2" /></svg></span>
          <span class="cap-btn"><svg width="10" height="8"><rect x="1.500" y=".5" width="7" height="6" fill="none" stroke="#444" /><path d="M1 1h8" stroke="#444" stroke-width="2" /></svg></span>
          <span class="cap-close"><svg width="8" height="8"><path d="M1 1l6 6M7 1L1 7" stroke="#fff" stroke-width="1.300" /></svg></span>
        </header>

        <div class="client">
          <div class="uv-menubar">
            <svg class="ico small-ico"><use href="#i-doc" /></svg>
            <span v-for="m in uvMenu" :key="m[1] + m[2]" class="uv-item">{{ m[0] }}<u>{{ m[1] }}</u>{{ m[2] }}</span>
            <div class="mdi">
              <span class="mdi-btn"><svg width="8" height="8"><path d="M1 6.500h4" stroke="#000" stroke-width="1.500" /></svg></span>
              <span class="mdi-btn"><svg width="9" height="9"><path d="M3 .5h5v5H6.500M1 3h5v5H1z" fill="none" stroke="#000" /></svg></span>
              <span class="mdi-btn"><svg width="8" height="8"><path d="M1 1l6 6M7 1L1 7" stroke="#000" stroke-width="1.400" /></svg></span>
            </div>
          </div>

          <div v-for="(bar, b) in [uvRow1, uvRow2]" :key="b" class="uv-bar" :class="'row' + b">
            <template v-for="(t, i) in bar" :key="i">
              <i v-if="t.gap" class="gap" :class="{ rule: t.gap >= 3 }" :style="{ width: t.gap + 'px' }"></i>
              <span v-else-if="t.combo" class="combo" :style="{ width: t.combo + 'px' }">
                <span class="combo-text">{{ t.text }}</span>
                <span class="combo-drop"><svg width="7" height="4"><path d="M0 0h7L3.500 4z" /></svg></span>
              </span>
              <span v-else class="tb wide" :class="{ dim: t.dim, on: t.on }"><svg class="ico"><use :href="'#i-' + t.icon" /></svg></span>
            </template>
          </div>

          <div class="uv-main">
            <aside class="workspace">
              <div class="ws-head"><span>Project Workspace</span><span class="ws-tools">▾ ✕</span></div>
              <div class="ws-tree">
                <div class="node"><i class="fold">−</i><svg class="ico"><use href="#i-target" /></svg><span class="node-text">Target 1</span></div>
                <div class="node lv1"><i class="fold">−</i><svg class="ico"><use href="#i-folder" /></svg><span class="node-text">Source Group 1</span></div>
                <div class="node lv2"><i class="fold">+</i><svg class="ico"><use href="#i-cfile" /></svg><span class="node-text picked">实例2.c</span></div>
              </div>
              <div class="ws-tabs">
                <span class="ws-tab first"><svg class="ico"><use href="#i-doc" /></svg></span>
                <span class="ws-tab"><svg class="ico"><use href="#i-regs" /></svg></span>
                <span class="ws-tab"><svg class="ico"><use href="#i-book" /></svg></span>
                <span class="ws-tab"><svg class="ico"><use href="#i-braces" /></svg></span>
                <span class="ws-tab"><svg class="ico"><use href="#i-tmpl" /></svg></span>
              </div>
            </aside>

            <div class="editor">
              <div class="edit-frame">
                <div class="gutter">
                  <div v-for="l in lines" :key="l.no" class="g-line">
                    <span class="g-no">{{ l.no }}</span>
                    <span class="g-fold" :class="l.fold"></span>
                  </div>
                </div>
                <div class="code">
                  <div v-for="l in lines" :key="l.no" class="c-line">
                    <span class="c-src" :style="{ width: l.width + 'px' }"><span v-for="(t, i) in l.tokens" :key="i" :class="t.kind">{{ t.text }}</span></span>
                    <span v-if="l.note" class="c-note"><span v-for="(n, i) in l.note" :key="i" :class="{ 'note-cjk': n.cjk }">{{ n.text }}</span></span>
                  </div>
                </div>
                <div class="vscroll">
                  <span class="sb-btn"><svg width="6" height="4"><path d="M3 0l3 4H0z" fill="#777" /></svg></span>
                  <span class="sb-btn"><svg width="6" height="4"><path d="M0 0h6L3 4z" fill="#777" /></svg></span>
                </div>
              </div>
              <div class="hscroll">
                <span class="sb-btn black"><svg width="4" height="6"><path d="M4 0v6L0 3z" /></svg></span>
                <span class="sb-thumb"></span>
                <span class="sb-btn black right"><svg width="4" height="6"><path d="M0 0v6l4-3z" /></svg></span>
              </div>
              <div class="filetabs">
                <span class="filetab"><svg class="ico"><use href="#i-doc" /></svg><span>实例2. c</span></span>
              </div>
            </div>
          </div>

          <div class="output">
            <div class="out-side"><span>✕</span><span class="out-label">Output</span></div>
            <div class="out-body">
              <div class="out-text">
                <pre class="log">creating hex file from "test2"...
"test2" - 0 Error(s), 0 Warning(s).</pre>
                <div class="out-scroll">
                  <span class="sb-btn black"><svg width="6" height="4"><path d="M3 0l3 4H0z" /></svg></span>
                  <span class="sb-btn black"><svg width="6" height="4"><path d="M0 0h6L3 4z" /></svg></span>
                </div>
              </div>
              <div class="out-tabs">
                <span class="nav-btn">|◂</span><span class="nav-btn">◂</span><span class="nav-btn">▸</span><span class="nav-btn">▸|</span>
                <span class="otab active">Build</span>
                <span class="otab">Command</span>
                <span class="otab">Find in Files</span>
                <span class="out-h">
                  <span class="sb-btn black"><svg width="4" height="6"><path d="M4 0v6L0 3z" /></svg></span>
                  <span class="sb-btn black"><svg width="4" height="6"><path d="M0 0v6l4-3z" /></svg></span>
                </span>
              </div>
            </div>
          </div>

          <footer class="uv-status">
            <span class="cell c-a"></span>
            <span class="cell c-b">L:7 C:21</span>
            <span class="cell c-c"></span>
            <span class="cell c-d">NUM</span>
            <span class="cell c-e"></span>
            <span class="cell c-e"></span>
            <span class="cell c-d">R/W</span>
          </footer>
        </div>
      </section>
    </div>
    <div class="bottom-strip"></div>

    <!-- site watermark over the screenshot -->
    <div class="mark">
      <svg class="mark-logo" viewBox="0 0 38 40" width="38" height="40">
        <rect x=".5" y=".5" width="37" height="39" rx="5" fill="#fff" fill-opacity=".88" stroke="#bbb" />
        <g fill="none" stroke-width="2.200" stroke-linecap="round">
          <path d="M3 6a5 5 0 0 0 8 3" stroke="#ecc850" />
          <path d="M13 9a5 5 0 0 1 10 0" stroke="#e87878" />
          <path d="M25 6a5 5 0 0 0 9 3" stroke="#6a70a8" />
          <path d="M11 6c2 2 2 3 3 6M23 6c-2 2-2 3-3 6" stroke="#aaa" />
          <path d="M3 17a5 5 0 0 1 7-3" stroke="#6a70a8" />
          <path d="M13 18a6 6 0 0 0 10 0" stroke="#ecc850" />
          <path d="M26 14a5 5 0 0 1 8 5" stroke="#e87878" />
          <path d="M4 25a5 5 0 0 1 7 3M24 28a5 5 0 0 1 8-4" stroke="#aaa" />
          <path d="M13 28a5 5 0 0 1 10 0" stroke="#ecc850" />
          <path d="M3 30a5 5 0 0 0 9 3" stroke="#e87878" />
          <path d="M25 32a5 5 0 0 0 9-1" stroke="#6a70a8" />
        </g>
      </svg>
      <div class="mark-text">
        <div class="mark-cn">面包板社区</div>
        <div class="mark-en">mbb.eet-china.com</div>
      </div>
    </div>
  </div>
</template>

<style>
html, body {
  margin: 0;
  background: #fff;
}
</style>

<style scoped>
.slide {
  position: relative;
  width: 1344px;
  height: 675px;
  overflow: hidden;
  background: #fff;
  font-family: "Liberation Sans", "Noto Sans CJK SC", sans-serif;
  color: #222;
}
.defs {
  position: absolute;
  width: 0;
  height: 0;
}
.heading {
  margin: 0;
  height: 106px;
  padding-left: 23px;
  box-sizing: border-box;
  font: 300 47.500px/69px "Noto Sans CJK SC", sans-serif;
  word-spacing: 3px;
  color: #2a2a2a;
}
.windows {
  display: flex;
  height: 561px;
  margin-left: 20px;
}
.win {
  display: flex;
  flex-direction: column;
  background: #f2c76b;
  filter: blur(.35px);
}
.isis {
  width: 630px;
  padding: 0 3px 3px 5px;
  box-sizing: border-box;
}
.uv {
  width: 685px;
  padding: 0 3px 3px 2px;
  box-sizing: border-box;
}
.bottom-strip {
  height: 8px;
  background: #edf5f9;
}

/* captions */
.caption {
  display: flex;
  align-items: center;
  flex: none;
  position: relative;
}
.isis-cap {
  height: 19px;
}
.uv-cap {
  height: 21px;
  align-items: flex-start;
}
.cap-text {
  font-size: 10px;
  color: #544d3c;
}
.isis-cap .cap-text {
  margin-left: 293px;
}
.uv-cap .cap-text {
  position: absolute;
  left: 199px;
  top: 1px;
}
.isis-logo {
  width: 10px;
  height: 8px;
  margin-left: 1px;
  background: #2a32d8;
  color: #cfd4ff;
  font-size: 6px;
  line-height: 8px;
  text-align: center;
}
.uv-logo {
  margin: 5px 0 0 2px;
}
.cap-btn {
  display: flex;
  justify-content: center;
  width: 17px;
  margin-top: 3px;
}
.uv-cap .cap-btn:nth-of-type(2) {
  margin-left: auto;
}
.uv-cap .cap-btn:first-of-type {
  margin-left: auto;
}
.cap-close {
  display: flex;
  align-items: center;
  justify-content: center;
  width: 28px;
  height: 12px;
  margin-left: 1px;
  background: #c75050;
  margin-top: 2px;
}

/* ISIS */
.isis-menu {
  display: flex;
  flex: none;
  gap: 5.800px;
  height: 12px;
  padding-left: 4px;
  background: #fff;
  font-size: 8px;
  line-height: 12px;
  color: #444;
}
.isis-bar {
  display: flex;
  flex: none;
  align-items: center;
  height: 19px;
  padding-left: 2px;
  background: #f0f0f0;
  border-bottom: 1px solid #aaa;
  box-sizing: border-box;
}
.isis-bar::before {
  content: "";
  flex: none;
  width: 1px;
  height: 15px;
  margin-right: 1.500px;
  background: #bbb;
}
.gap {
  flex: none;
  height: 13px;
  position: relative;
}
.gap.rule::after {
  content: "";
  position: absolute;
  left: 50%;
  top: 0;
  bottom: 0;
  width: 1px;
  background: #c8c8c8;
}
.tb {
  display: flex;
  flex: none;
  justify-content: center;
  align-items: center;
  width: 13px;
  height: 14px;
}
.tb.wide {
  width: 15px;
}
.tb.dim .ico {
  opacity: .55;
}
.tb.on {
  box-sizing: border-box;
  background: #dcebfa;
  outline: 1px solid #69a9ef;
  outline-offset: -1px;
}
.ico {
  display: block;
  width: 12px;
  height: 12px;
}
.isis-main {
  display: flex;
  flex: none;
  height: 490px;
  background: #f0f0f0;
}
.side {
  display: flex;
  flex-direction: column;
  flex: none;
  width: 18px;
  padding: 4px 3px 0 0;
  box-sizing: border-box;
}
.side-btn {
  display: flex;
  flex: none;
  justify-content: center;
  align-items: center;
  height: 13.300px;
}
.side-btn.first {
  background: #fff;
}
.side-btn .ico {
  width: 11px;
  height: 11px;
}
.side-rule {
  flex: none;
  position: relative;
}
.side-rule::after {
  content: "";
  position: absolute;
  left: 1px;
  right: 1px;
  bottom: 0;
  height: 1px;
  background: #ccc;
}
.angle {
  flex: none;
  width: 14px;
  height: 10px;
  margin: 2px 0 1.300px 1px;
  padding: 0 0 0 1px;
  border: 0;
  border-left: 1px solid #777;
  border-top: 1px solid #777;
  background: #fff;
  font: 7px "Liberation Sans", sans-serif;
  color: #333;
  box-sizing: border-box;
}
.picker {
  display: flex;
  flex-direction: column;
  flex: none;
  width: 74px;
}
.preview {
  height: 61px;
  background: #e0e0d0;
  box-shadow: inset 0 0 0 1px #999;
}
.preview svg {
  display: block;
}
.dev-head {
  display: flex;
  gap: 1px;
  height: 10px;
  margin-top: 3px;
  padding-left: 1px;
  font-size: 7.500px;
  line-height: 10px;
  color: #333;
}
.dev-btn {
  width: 9px;
  text-align: center;
  background: #f4f4f4;
  box-shadow: inset 0 0 0 1px #999;
}
.dev-title {
  flex: 1;
  text-align: center;
  background: #c9d3e0;
}
.dev-list {
  flex: 1;
  margin: 0;
  padding: 0;
  list-style: none;
  background: #fff;
  border: 1px solid #aaa;
  border-top: 0;
  font-size: 6.600px;
  line-height: 7.800px;
  color: #333;
}
.dev-list li {
  padding-left: 1px;
  white-space: nowrap;
}
.dev-list li.sel {
  background: #3399ff;
  color: #eef6ff;
  padding-bottom: 1px;
}
.sheet {
  display: block;
  flex: none;
  margin-left: 1px;
  box-shadow: inset 1px 1px 0 #999;
}
.chip {
  fill: #c8c8a8;
  stroke: #8c1c1c;
  stroke-width: 1.500;
}
.pin {
  stroke: #8c2020;
  stroke-width: 1.600;
  fill: none;
}
.pin.thin {
  stroke-width: 1.200;
}
.wire {
  stroke: #1a6420;
  stroke-width: 1.300;
  fill: none;
}
.wire.thin {
  stroke: #557;
}
.dot {
  fill: #0d4a12;
}
.arrow {
  fill: none;
  stroke: #1a6420;
  stroke-width: 1.300;
}
.contact {
  fill: #e0e0d0;
  stroke: #8c2020;
}
.big {
  font-size: 11.500px;
  fill: #111;
}
.small {
  font-size: 7.500px;
  fill: #333;
}
.tiny {
  fill: #555;
}
.over {
  text-decoration: overline;
}
.isis-status {
  display: flex;
  flex: none;
  align-items: center;
  height: 18px;
  padding-left: 5px;
  background: #f0f0f0;
  border-top: 1px solid #aaa;
  box-sizing: border-box;
  font-size: 7.500px;
}
.sim {
  display: flex;
  gap: 0;
}
.sim-btn {
  display: flex;
  align-items: center;
  justify-content: center;
  width: 22px;
  height: 9px;
  margin-right: .800px;
  border: 1px solid #222;
  border-right-color: #555;
  background: #f4f4f4;
}
.info {
  margin-left: 5px;
}
.msgs {
  width: 44px;
  margin-left: 1px;
  font-size: 7px;
  white-space: nowrap;
  color: #a0a0a0;
  background: #f8f8f8;
}
.sheetname {
  flex: 1;
  margin-left: 7px;
  padding-left: 1px;
  line-height: 11px;
  border: 1px solid #ccc;
  border-right: 0;
  color: #444;
}

/* uVision */
.client {
  display: flex;
  flex-direction: column;
  flex: 1;
  min-height: 0;
  background: #f0f0f0;
}
.uv-menubar {
  display: flex;
  align-items: center;
  flex: none;
  height: 20px;
  font-size: 8.200px;
  color: #333;
}
.small-ico {
  width: 10px;
  height: 11px;
  margin: 0 3px 0 6px;
}
.uv-item {
  margin-right: 6.100px;
}
.uv-item u {
  text-underline-offset: 1px;
}
.mdi {
  display: flex;
  gap: 1px;
  margin-left: auto;
  margin-right: 2px;
}
.mdi-btn {
  display: flex;
  align-items: center;
  justify-content: center;
  width: 21px;
  height: 11px;
  background: #f4f4f4;
  box-shadow: inset -1px -1px 0 #666, inset 1px 1px 0 #fff;
}
.uv-bar {
  display: flex;
  align-items: center;
  flex: none;
}
.row0 {
  height: 17px;
  padding-left: 6px;
}
.row1 {
  height: 20px;
  padding-left: 7px;
}
.combo {
  display: flex;
  flex: none;
  height: 11px;
  background: #fff;
  box-shadow: inset 1px 1px 0 #888;
  font-size: 9px;
  line-height: 11px;
  color: #111;
}
.row1 .combo {
  height: 14px;
  line-height: 14px;
  font-weight: 700;
  font-size: 8.700px;
}
.combo-text {
  flex: 1;
  padding-left: 3px;
}
.combo-drop {
  display: flex;
  align-items: center;
  justify-content: center;
  width: 10px;
  background: #f0f0f0;
  box-shadow: inset -1px -1px 0 #777;
}
.uv-main {
  display: flex;
  flex: none;
  height: 415px;
  padding-top: 1px;
  box-sizing: border-box;
  border-bottom: 2px solid #aaa;
}
.workspace {
  display: flex;
  flex-direction: column;
  flex: none;
  width: 120px;
  padding-left: 2px;
  box-sizing: border-box;
}
.ws-head {
  display: flex;
  justify-content: space-between;
  height: 11px;
  padding: 0 7px 0 1px;
  font-size: 6.800px;
  line-height: 10px;
  color: #444;
}
.ws-tools {
  font-size: 5px;
}
.ws-tree {
  flex: 1;
  width: 110px;
  padding-top: 2px;
  background: #fff;
  box-shadow: inset 1px 1px 0 #aaa;
  font-size: 8px;
  color: #444;
  box-sizing: border-box;
}
.node {
  display: flex;
  align-items: center;
  height: 13px;
  padding-left: 5px;
}
.node.lv1 {
  padding-left: 18px;
}
.node.lv2 {
  padding-left: 31px;
}
.node .ico {
  width: 11px;
  height: 11px;
  margin-left: 3px;
}
.fold {
  display: block;
  width: 5px;
  height: 5px;
  border: 1px solid #999;
  font: 6px/5px "Liberation Mono", monospace;
  text-align: center;
  color: #333;
}
.node-text {
  margin-left: 5px;
  white-space: nowrap;
}
.node.lv1 .node-text {
  margin-left: 4px;
}
.node.lv2 .node-text {
  margin-left: 3px;
  padding: 0 1px;
  background: #e4e4e4;
}
.ws-tabs {
  display: flex;
  height: 15px;
  width: 110px;
  padding-left: 6px;
  box-sizing: border-box;
  background: #fff;
  border-top: 1px solid #888;
}
.ws-tab {
  display: flex;
  justify-content: center;
  align-items: center;
  width: 19.500px;
}
.ws-tab.first {
  background: #f0f0f0;
}
.editor {
  display: flex;
  flex-direction: column;
  flex: 1;
  min-width: 0;
  margin-left: 1px;
}
.edit-frame {
  display: flex;
  flex: none;
  height: 384px;
  margin-right: 2px;
  background: #fff;
  border-top: 2px solid #999;
}
.gutter {
  flex: none;
  width: 28px;
  background: #e4e4e4;
  border-left: 2px solid #888;
}
.g-line {
  display: flex;
  align-items: center;
  height: 12.130px;
  font: 700 7.400px "DejaVu Sans Mono", monospace;
  color: #333;
}
.g-no {
  width: 20px;
  padding-left: 9px;
  box-sizing: border-box;
  letter-spacing: .4px;
}
.g-fold {
  align-self: stretch;
  position: relative;
  width: 8px;
}
.g-fold.box::before {
  content: "";
  position: absolute;
  left: 0;
  top: 2px;
  width: 6px;
  height: 6px;
  border: 1px solid #888;
  background: linear-gradient(#444, #444) center / 4px 1px no-repeat;
}
.g-fold.bar::before {
  content: "";
  position: absolute;
  left: 3.500px;
  top: 0;
  bottom: 0;
  width: 1px;
  background: #888;
}
.g-fold.end::before {
  content: "";
  position: absolute;
  left: 3.500px;
  top: 0;
  width: 4px;
  height: 7px;
  border-left: 1px solid #888;
  border-bottom: 1px solid #888;
}
.code {
  flex: 1;
  min-width: 0;
  overflow: hidden;
  font: 10.550px/12.130px "Liberation Mono", "Noto Sans CJK SC", monospace;
  color: #4a4a4a;
}
.c-line {
  display: flex;
  height: 12.130px;
  white-space: pre;
}
.c-src {
  flex: none;
}
.c-note {
  color: #3aa2b2;
}
.note-cjk {
  font: 300 11.900px/0 "Noto Sans CJK SC", sans-serif;
  letter-spacing: .7px;
  color: #3aa2b2;
}
.op {
  color: #6a64c6;
}
.num, .str {
  color: #a53ea5;
}
.pre {
  color: #46468a;
}
.vscroll {
  display: flex;
  flex-direction: column;
  justify-content: space-between;
  flex: none;
  width: 11px;
  padding: 3px 0 0;
  background: #f6f6f6;
}
.sb-btn {
  display: flex;
  flex: none;
  align-items: center;
  justify-content: center;
  width: 10px;
  height: 10px;
  background: #f0f0f0;
  box-shadow: inset -1px -1px 0 #888, inset 1px 1px 0 #fff;
}
.hscroll {
  display: flex;
  flex: none;
  height: 10px;
  margin-right: 2px;
  padding-left: 4px;
  background: #f6f6f6;
}
.sb-thumb {
  width: 20px;
  background: #f0f0f0;
  box-shadow: inset -1px -1px 0 #888;
}
.sb-btn.right {
  margin-left: auto;
  margin-right: 13px;
}
.filetabs {
  flex: none;
  height: 17px;
  margin-top: 1px;
  padding-left: 1px;
  background: #fff;
  border-top: 1px solid #aaa;
}
.filetab {
  display: flex;
  align-items: center;
  gap: 8px;
  width: 55px;
  height: 15px;
  padding-left: 2px;
  box-sizing: border-box;
  background: #f0f0f0;
  border-right: 1px solid #888;
  font-size: 8px;
  color: #444;
}
.output {
  display: flex;
  flex: none;
  height: 52px;
  padding: 4px 0 0 3px;
  box-sizing: border-box;
  border-top: 1px solid #bbb;
}
.out-side {
  display: flex;
  flex-direction: column;
  align-items: center;
  width: 8px;
  height: 43px;
  background: #f8f8f8;
  box-shadow: inset 0 0 0 1px #ccc;
  font-size: 5px;
  color: #333;
}
.out-label {
  margin-top: 8px;
  font-size: 6.500px;
  writing-mode: vertical-rl;
  transform: rotate(180deg);
}
.out-body {
  flex: 1;
  display: flex;
  flex-direction: column;
  margin-right: 2px;
}
.out-text {
  display: flex;
  height: 30px;
  background: #fff;
  border-top: 1px solid #666;
  border-bottom: 1px solid #444;
  box-sizing: border-box;
}
.log {
  flex: 1;
  margin: 0;
  padding: 3px 0 0 3.500px;
  font: 9.570px/10px "Liberation Mono", monospace;
  color: #333;
}
.out-scroll {
  display: flex;
  flex-direction: column;
  justify-content: space-between;
  margin-right: 2px;
  padding: 1px 0;
}
.out-tabs {
  display: flex;
  align-items: center;
  height: 13px;
  padding-left: 3px;
  font-size: 7.800px;
  color: #444;
}
.nav-btn {
  width: 10.500px;
  height: 10px;
  margin-right: .500px;
  background: #e8e8e8;
  box-shadow: inset 0 0 0 1px #bbb;
  font-size: 5px;
  line-height: 10px;
  text-align: center;
  color: #999;
}
.otab {
  position: relative;
  padding: 0 6px 0 5px;
  line-height: 11px;
}
.otab::after {
  content: "";
  position: absolute;
  right: 1px;
  top: 0;
  bottom: 0;
  width: 1px;
  background: #444;
  transform: skewX(-16deg);
}
.otab:first-of-type {
  margin-left: 4px;
}
.otab.active {
  font-weight: 700;
  color: #111;
}
.out-h {
  display: flex;
  gap: 15px;
  margin-left: auto;
  margin-right: 11px;
}
.uv-status {
  display: flex;
  flex: none;
  gap: 3px;
  align-items: center;
  height: 12px;
  padding-left: 365px;
  background: #f0f0f0;
  font-size: 7.800px;
  color: #333;
}
.cell {
  height: 11px;
  padding-left: 1px;
  line-height: 11px;
  box-sizing: border-box;
  box-shadow: inset 1px 1px 0 #aaa;
}
.c-a {
  width: 106px;
}
.c-b {
  width: 44px;
}
.c-c {
  width: 51px;
}
.c-d {
  width: 24px;
}
.c-e {
  width: 19px;
}

/* watermark */
.mark {
  position: absolute;
  left: 1167px;
  top: 623px;
  display: flex;
}
.mark-logo {
  display: block;
  flex: none;
}
.mark-text {
  margin-left: 8px;
}
.mark-cn {
  font: 23.500px/25px "Noto Sans CJK SC", sans-serif;
  color: rgba(185, 185, 185, .5);
  white-space: nowrap;
}
.mark-en {
  margin-top: 1px;
  font-size: 10px;
  letter-spacing: 1.300px;
  color: rgba(170, 170, 170, .45);
  white-space: nowrap;
}
</style>
